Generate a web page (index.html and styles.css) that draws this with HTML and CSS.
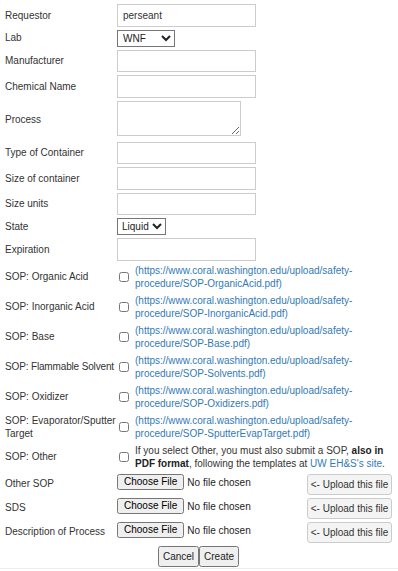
FILE: index.html
```html
<!DOCTYPE html>
<html lang="en">
<head>
  <meta charset="UTF-8" />
  <title>New Chemical Request</title>
  <link rel="stylesheet" href="styles.css">
</head>
<body>
  <form class="request-form">
    <table class="form-table">
      <colgroup>
        <col class="label-col">
        <col>
      </colgroup>
      <tr>
        <th>Requestor</th>
        <td><input class="text" type="text" value="perseant"></td>
      </tr>
      <tr>
        <th>Lab</th>
        <td>
          <select class="pick lab-pick">
            <option>WNF</option>
            <option>MAF</option>
          </select>
        </td>
      </tr>
      <tr>
        <th>Manufacturer</th>
        <td><input class="text" type="text"></td>
      </tr>
      <tr>
        <th>Chemical Name</th>
        <td><input class="text" type="text"></td>
      </tr>
      <tr>
        <th>Process</th>
        <td><textarea class="area"></textarea></td>
      </tr>
      <tr>
        <th>Type of Container</th>
        <td><input class="text" type="text"></td>
      </tr>
      <tr>
        <th>Size of container</th>
        <td><input class="text" type="text"></td>
      </tr>
      <tr>
        <th>Size units</th>
        <td><input class="text" type="text"></td>
      </tr>
      <tr>
        <th>State</th>
        <td>
          <select class="pick state-pick">
            <option>Liquid</option>
            <option>Solid</option>
            <option>Gas</option>
          </select>
        </td>
      </tr>
      <tr>
        <th>Expiration</th>
        <td><input class="text" type="text"></td>
      </tr>

      <tr>
        <th>SOP: Organic Acid</th>
        <td>
          <div class="sop">
            <input type="checkbox">
            <a href="#">(https://www.coral.washington.edu/upload/safety-procedure/SOP-OrganicAcid.pdf)</a>
          </div>
        </td>
      </tr>
      <tr>
        <th>SOP: Inorganic Acid</th>
        <td>
          <div class="sop">
            <input type="checkbox">
            <a href="#">(https://www.coral.washington.edu/upload/safety-procedure/SOP-InorganicAcid.pdf)</a>
          </div>
        </td>
      </tr>
      <tr>
        <th>SOP: Base</th>
        <td>
          <div class="sop">
            <input type="checkbox">
            <a href="#">(https://www.coral.washington.edu/upload/safety-procedure/SOP-Base.pdf)</a>
          </div>
        </td>
      </tr>
      <tr>
        <th class="one-line">SOP: Flammable Solvent</th>
        <td>
          <div class="sop">
            <input type="checkbox">
            <a href="#">(https://www.coral.washington.edu/upload/safety-procedure/SOP-Solvents.pdf)</a>
          </div>
        </td>
      </tr>
      <tr>
        <th>SOP: Oxidizer</th>
        <td>
          <div class="sop">
            <input type="checkbox">
            <a href="#">(https://www.coral.washington.edu/upload/safety-procedure/SOP-Oxidizers.pdf)</a>
          </div>
        </td>
      </tr>
      <tr>
        <th>SOP: Evaporator/Sputter Target</th>
        <td>
          <div class="sop">
            <input type="checkbox">
            <a href="#">(https://www.coral.washington.edu/upload/safety-procedure/SOP-SputterEvapTarget.pdf)</a>
          </div>
        </td>
      </tr>
      <tr>
        <th>SOP: Other</th>
        <td>
          <div class="sop">
            <input type="checkbox">
            <span>If you select Other, you must also submit a SOP, <b>also in PDF format</b>, following the templates at <a href="#">UW EH&amp;S's site</a>.</span>
          </div>
        </td>
      </tr>

      <tr>
        <th>Other SOP</th>
        <td>
          <div class="file-line">
            <input class="file" type="file">
            <button class="upload" type="button">&lt;- Upload this file</button>
          </div>
        </td>
      </tr>
      <tr>
        <th>SDS</th>
        <td>
          <div class="file-line">
            <input class="file" type="file">
            <button class="upload" type="button">&lt;- Upload this file</button>
          </div>
        </td>
      </tr>
      <tr>
        <th>Description of Process</th>
        <td>
          <div class="file-line">
            <input class="file" type="file">
            <button class="upload" type="button">&lt;- Upload this file</button>
          </div>
        </td>
      </tr>
    </table>

    <div class="actions">
      <button class="act" type="button">Cancel</button><button class="act" type="submit">Create</button>
    </div>
  </form>
</body>
</html>
```

FILE: styles.css
```css
* { box-sizing: border-box; }

html,
body {
  margin: 0;
  background: #fff;
  font-family: "Liberation Sans", Arial, sans-serif;
  font-size: 10px;
  color: #333;
}

.request-form {
  padding: 2.5px 5px 0 4px;
  border-bottom: 1px solid #eee;
}

.form-table {
  width: 100%;
  table-layout: fixed;
  border-collapse: collapse;
}
.label-col { width: 113px; }
.form-table th {
  padding: 1.5px 0 1.5px 1px;
  font-weight: normal;
  text-align: left;
  vertical-align: middle;
  line-height: 13.5px;
}
.form-table th.one-line {
  white-space: nowrap;
  letter-spacing: -0.15px;
}
.form-table td {
  padding: 1.5px 0;
  vertical-align: middle;
}

.text {
  display: block;
  width: 139px;
  height: 22.5px;
  padding: 3px 5px;
  border: 1px solid #ccc;
  font: inherit;
  color: #333;
}

.pick {
  display: block;
  height: 17px;
  padding: 0 0 0 1px;
  border: 1px solid #767676;
  border-radius: 0;
  background: #fff;
  font: inherit;
  color: #222;
}
.lab-pick { width: 58px; }
.state-pick {
  width: auto;
  padding-left: 0;
}

.area {
  display: block;
  width: 124px;
  height: 35px;
  margin-bottom: 3px;
  border: 1px solid #ccc;
  font: inherit;
  resize: both;
}

.sop {
  display: flex;
  align-items: center;
  line-height: 13.5px;
}
.sop input {
  flex: none;
  width: 10px;
  height: 10px;
  margin: 0 6px 0 2px;
}
.sop a,
.sop span {
  max-width: 250px;
}
.sop b { color: #222; }
a {
  color: #337ab7;
  text-decoration: none;
}

.file-line {
  display: flex;
  justify-content: space-between;
  align-items: flex-start;
}
.file {
  font: inherit;
  color: #222;
}
.file::file-selector-button {
  height: 16px;
  font: inherit;
  padding: 0 5px;
  margin-right: 3px;
}
.upload {
  width: 86px;
  height: 21px;
  margin-right: 1px;
  padding: 0;
  border: 1px solid #ccc;
  border-radius: 3px;
  background: #f4f4f4;
  font: inherit;
  color: #333;
}

.actions {
  display: flex;
  justify-content: center;
  padding: 2px 0 1px;
}
.act {
  height: 21px;
  padding: 0 3px;
  font: inherit;
  color: #222;
}
```
